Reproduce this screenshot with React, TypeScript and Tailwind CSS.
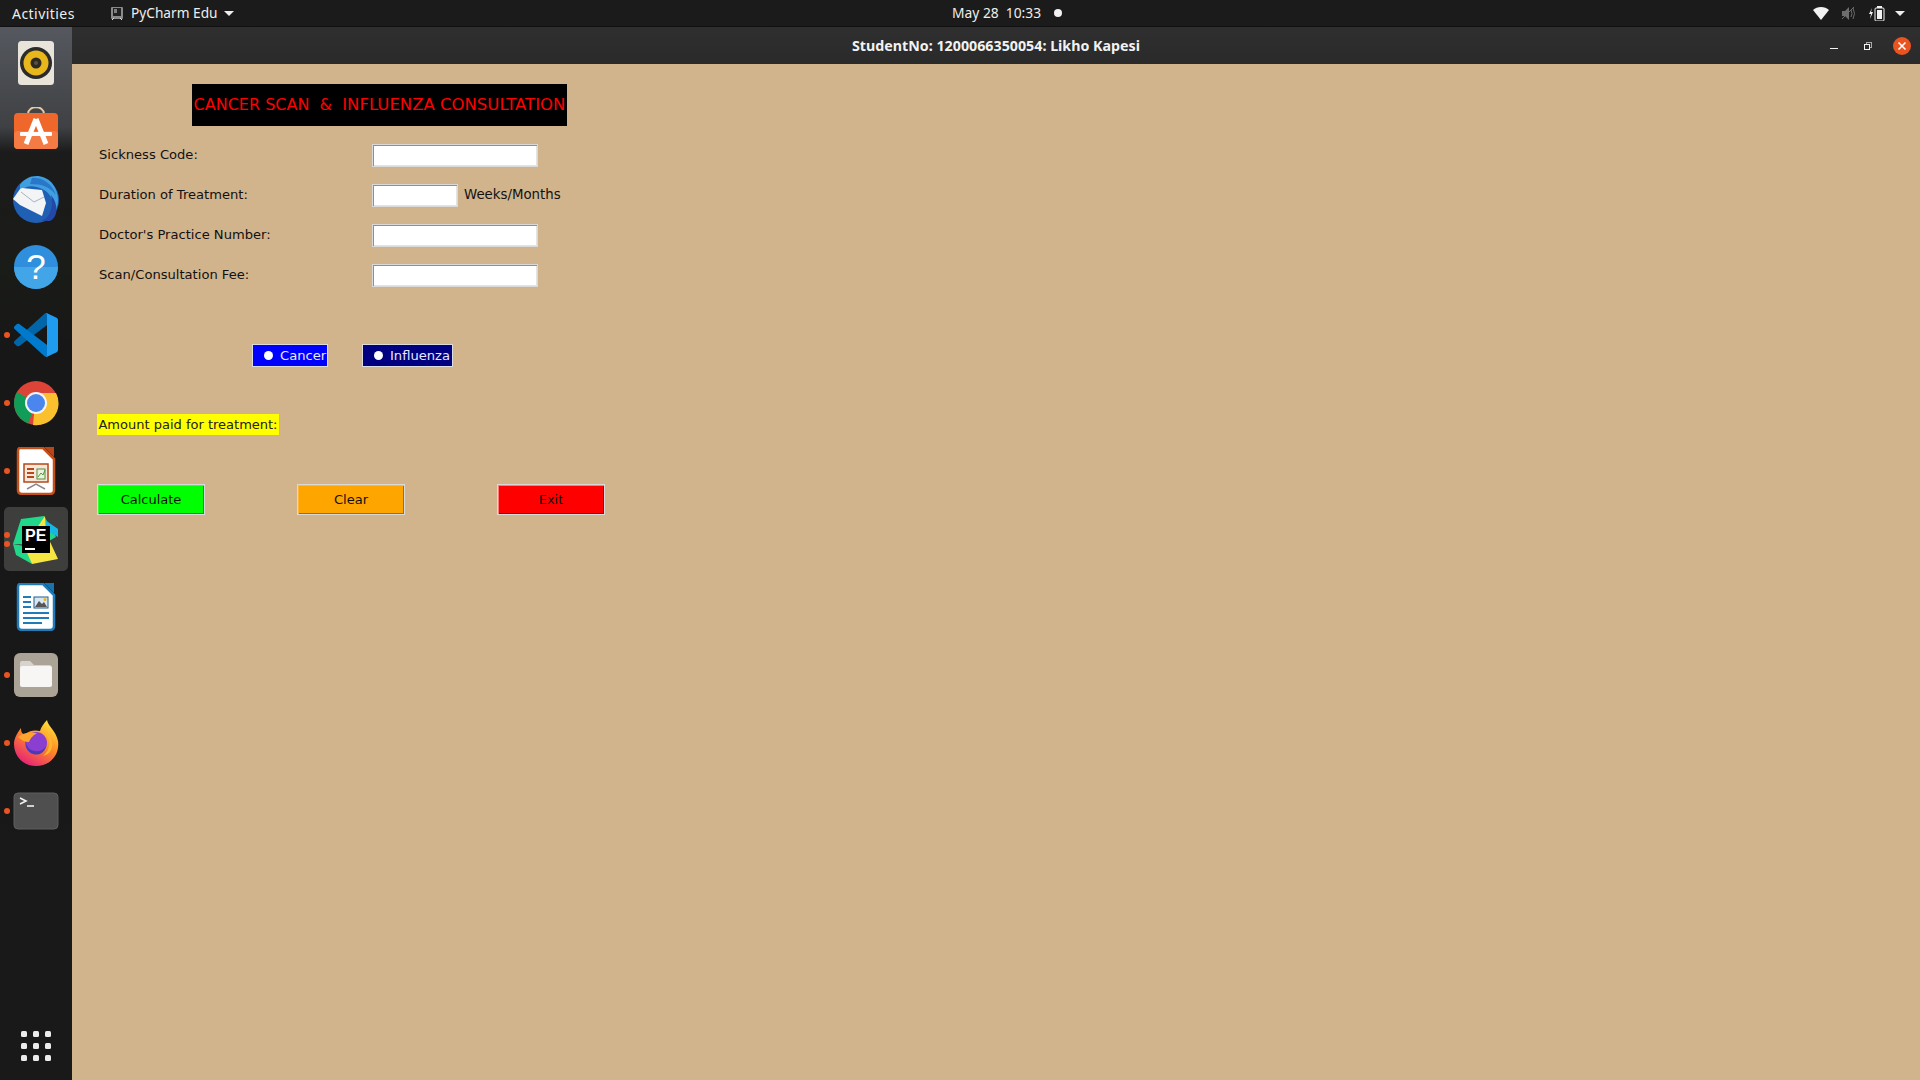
import React from 'react';

const dejavu = "font-['DejaVu_Sans',sans-serif]";

const Rhythmbox = () => (
  <svg width="48" height="48" viewBox="0 0 48 48">
    <rect x="6" y="2" width="36" height="44" rx="3.5" fill="#e8e4da" />
    <circle cx="24" cy="24" r="16" fill="#2b2b2b" />
    <circle cx="24" cy="24" r="12.5" fill="#e8b71c" />
    <circle cx="24" cy="24" r="5.5" fill="#2f2a20" />
    <circle cx="24" cy="24" r="2" fill="#55524a" />
  </svg>
);

const Software = () => (
  <svg width="48" height="48" viewBox="0 0 48 48">
    <path d="M16 7 C16 -2 32 -2 32 7" fill="none" stroke="#e9c9a2" strokeWidth="2" />
    <rect x="2" y="6" width="44" height="36" rx="4" fill="#f0672b" />
    <rect x="2" y="24" width="44" height="18" rx="4" fill="#f47b43" />
    <path d="M24 12 L14 37 M24 12 L34 37" stroke="#fff" strokeWidth="5" fill="none" />
    <rect x="8" y="25" width="32" height="4" rx="1" fill="#fff" />
  </svg>
);

const Thunderbird = () => (
  <svg width="48" height="48" viewBox="0 0 48 48">
    <circle cx="24" cy="25" r="23" fill="#1f5fb4" />
    <path d="M8 10 C14 0 30 -3 40 8 C48 18 48 32 40 42 C44 30 40 18 30 14 C22 10 14 10 8 16Z" fill="#3f9fe0" />
    <path d="M20 3 C30 2 40 8 44 20 C38 12 30 9 18 9Z" fill="#2a77c9" />
    <path d="M8 14 L10 13 L30 15 L34 28 L30 41 L8 30 L1 24Z" fill="#f3f4f6" />
    <path d="M9 17 L22 27 L32 22" fill="none" stroke="#a9b2bd" strokeWidth="1" />
    <path d="M30 46 C38 42 42 32 39 20 C47 30 46 42 38 46Z" fill="#2348a8" />
  </svg>
);

const Help = () => (
  <svg width="48" height="48" viewBox="0 0 48 48">
    <circle cx="24" cy="24" r="22" fill="#2f8fdc" />
    <path d="M2 24 H46 A22 22 0 0 1 2 24Z" fill="#42a5e8" />
    <text x="24" y="36" textAnchor="middle" fontSize="35" fontFamily="'Liberation Sans',sans-serif" fill="#fff">?</text>
  </svg>
);

const VSCode = () => (
  <svg width="44" height="44" viewBox="0 0 100 100">
    <path d="M96.4 10.8 75.8.9c-2.4-1.1-5.2-.7-7.1 1.2L1.3 63.6c-1.8 1.7-1.8 4.5 0 6.2l5.5 5c1.5 1.3 3.7 1.4 5.3.2L93.2 13.6c2.7-2.1 6.6-.2 6.6 3.2v-.2c0-2.4-1.4-4.6-3.4-5.8z" fill="#0065a9" />
    <path d="M96.4 89.2 75.8 99.1c-2.4 1.1-5.2.7-7.1-1.2L1.3 36.4c-1.8-1.7-1.8-4.5 0-6.2l5.5-5c1.5-1.3 3.7-1.4 5.3-.2l81.1 61.4c2.7 2.1 6.6.2 6.6-3.2v.2c0 2.4-1.4 4.6-3.4 5.8z" fill="#007acc" />
    <path d="M75.8 99.1c-2.4 1.1-5.2.7-7.1-1.2 2.3 2.3 6.3.7 6.3-2.6V4.7c0-3.3-4-4.9-6.3-2.6 1.9-1.9 4.7-2.3 7.1-1.2l20.6 9.9c2.2 1 3.6 3.2 3.6 5.6v67.2c0 2.4-1.4 4.6-3.6 5.6z" fill="#1f9cf0" />
  </svg>
);

const Chrome = () => (
  <svg width="48" height="48" viewBox="0 0 48 48">
    <circle cx="24" cy="24" r="22" fill="#db4437" />
    <path d="M24 24 L5 13 A22 22 0 0 0 16 44.5Z" fill="#0f9d58" />
    <path d="M24 14 H44 A22 22 0 0 1 21 46 Z" fill="#fbc02d" />
    <circle cx="24" cy="24" r="11" fill="#f5f5f5" />
    <circle cx="24" cy="24" r="9" fill="#4b86ee" />
  </svg>
);

const Impress = () => (
  <svg width="48" height="48" viewBox="0 0 48 48">
    <path d="M8 1 H31 L42 12 V43 Q42 47 38 47 H10 Q6 47 6 43 V4 Q6 1 8 1Z" fill="#fff" stroke="#c4501b" strokeWidth="2.5" />
    <path d="M32 0 H42 V10Z" fill="#b5471b" />
    <rect x="12" y="17" width="24" height="18" fill="#f7e6da" stroke="#b5471b" strokeWidth="1.5" />
    <path d="M15 22 H22 M15 26 H22 M15 30 H22" stroke="#b5471b" strokeWidth="2" />
    <rect x="25" y="22" width="8" height="10" fill="#e9f2df" stroke="#5b8a3a" />
    <path d="M26 30 L29 26 L31 28 L33 23" stroke="#4f9a3c" fill="none" />
    <path d="M15 42 L24 37 L33 42" fill="none" stroke="#8a8a8a" strokeWidth="1.5" />
  </svg>
);

const PyCharmEdu = () => (
  <svg width="48" height="52" viewBox="0 0 48 52">
    <path d="M9 6 L32 3 L44 24 L30 32 L1 31Z" fill="#21d789" />
    <path d="M32 6 V16 L46 24 L46 16 L36 9Z" fill="#17b7e5" />
    <path d="M33 3 L34 20 L46 46 L20 51 L10 37Z" fill="#f5e642" />
    <path d="M1 31 L12 33 L20 51 L4 42Z" fill="#21d789" />
    <rect x="10" y="13" width="28" height="27" fill="#000" />
    <text x="13" y="28" fontSize="16" fontWeight="700" fontFamily="'Liberation Sans',sans-serif" fill="#fff">PE</text>
    <rect x="13" y="35" width="10" height="2" fill="#fff" />
  </svg>
);

const Writer = () => (
  <svg width="48" height="48" viewBox="0 0 48 48">
    <path d="M8 1 H31 L42 12 V43 Q42 47 38 47 H10 Q6 47 6 43 V4 Q6 1 8 1Z" fill="#fff" stroke="#1f7cb8" strokeWidth="2.5" />
    <path d="M32 0 H42 V10Z" fill="#1774ad" />
    <path d="M11 14 H19 M11 19 H19 M11 24 H19" stroke="#1f7cb8" strokeWidth="2" />
    <rect x="22" y="14" width="14" height="11" fill="#d8e7f1" stroke="#1f5f8b" />
    <path d="M23 24 L27 18 L30 21 L32 19 L35 24Z" fill="#555" />
    <circle cx="33" cy="16.5" r="1.5" fill="#e8b71c" />
    <path d="M11 30 H37 M11 35 H37 M11 40 H30" stroke="#1f7cb8" strokeWidth="2" />
  </svg>
);

const Files = () => (
  <svg width="48" height="48" viewBox="0 0 48 48">
    <rect x="2" y="2" width="44" height="44" rx="6" fill="#aaa396" />
    <path d="M8 12 Q8 10 10 10 H18 L22 14 H37 Q40 14 40 17 V33 Q40 36 37 36 H11 Q8 36 8 33Z" fill="#d8d4cd" />
    <rect x="8" y="15" width="32" height="21" rx="2.5" fill="#f8f6f4" />
  </svg>
);

const Firefox = () => (
  <svg width="48" height="48" viewBox="0 0 48 48">
    <defs>
      <linearGradient id="ffBody" x1="0.8" y1="0" x2="0.2" y2="1">
        <stop offset="0" stopColor="#ffe53b" />
        <stop offset="0.45" stopColor="#ff8a24" />
        <stop offset="1" stopColor="#e5197f" />
      </linearGradient>
    </defs>
    <path d="M2 25 C2 20 5 14 9 9 C9 13 10 15 13 15 C18 11 24 11 28 12 C29 8 32 4 35 1 C36 7 44 12 46 22 C48 37 37 47 24 47 C11 47 2 37 2 25Z" fill="url(#ffBody)" />
    <circle cx="24" cy="24" r="11" fill="#8a3fd0" />
    <path d="M14 24 A10 10 0 0 0 34 27 A11 11 0 0 1 14 24Z" fill="#4b3ab5" />
    <path d="M6 18 C12 13 20 13 25 14 C20 17 18 20 17 23 C13 23 9 21 6 18Z" fill="#ffa52b" />
    <path d="M33 13 C39 20 39 31 31 37 C43 34 43 20 33 13Z" fill="#ffb52e" />
  </svg>
);

const Terminal = () => (
  <svg width="48" height="48" viewBox="0 0 48 48">
    <rect x="2" y="6" width="44" height="36" rx="4" fill="#4f4f4f" stroke="#5f5f5f" />
    <path d="M8 11 L14 14 L8 17" fill="none" stroke="#f2f2f2" strokeWidth="1.6" />
    <path d="M15 19 H22" stroke="#f2f2f2" strokeWidth="1.6" />
  </svg>
);

const AppGrid = () => (
  <div className="grid grid-cols-3 gap-[6px]">
    {Array.from({ length: 9 }).map((_, i) => (
      <div key={i} className="w-[6px] h-[6px] rounded-[1.5px] bg-[#ececec]" />
    ))}
  </div>
);

const dockItems = [
  { id: 'rhythmbox', icon: <Rhythmbox />, dots: 0 },
  { id: 'software', icon: <Software />, dots: 0 },
  { id: 'thunderbird', icon: <Thunderbird />, dots: 0 },
  { id: 'help', icon: <Help />, dots: 0 },
  { id: 'vscode', icon: <VSCode />, dots: 1 },
  { id: 'chrome', icon: <Chrome />, dots: 1 },
  { id: 'impress', icon: <Impress />, dots: 1 },
  { id: 'pycharm', icon: <PyCharmEdu />, dots: 2, active: true },
  { id: 'writer', icon: <Writer />, dots: 0 },
  { id: 'files', icon: <Files />, dots: 1 },
  { id: 'firefox', icon: <Firefox />, dots: 1 },
  { id: 'terminal', icon: <Terminal />, dots: 1 },
];

const Dock = () => (
  <aside className="relative w-[72px] shrink-0 flex flex-col items-center pt-[2px] pb-[13px] bg-[linear-gradient(180deg,#55585e_0px,#3f4144_100px,#1b1b1b_125px,#1a1c18_240px,#171717_320px,#191919_100%)]">
    {dockItems.map((item) => (
      <div key={item.id} className="relative w-full h-[68px] flex items-center justify-center">
        {item.active && <div className="absolute left-[4px] top-[2px] w-[64px] h-[64px] rounded-[5px] bg-[#3e3e3c]" />}
        {item.dots > 0 && (
          <div className="absolute left-[4px] top-0 h-full flex flex-col justify-center gap-[3px]">
            {Array.from({ length: item.dots }).map((_, i) => (
              <div key={i} className="w-[6px] h-[6px] rounded-full bg-[#e95420]" />
            ))}
          </div>
        )}
        <div className="relative flex">{item.icon}</div>
      </div>
    ))}
    <div className="mt-auto h-[42px] flex items-center justify-center">
      <AppGrid />
    </div>
  </aside>
);

const TopBar = () => (
  <header className="h-[27px] shrink-0 flex items-center bg-[#1b1b1b] text-[#eeeeec] text-[14px] font-['Noto_Sans',sans-serif] border-b border-[#111]">
    <div className="w-[952px] shrink-0 flex items-center">
      <span className="ml-[12px] w-[97px] tracking-[0.45px]">Activities</span>
      <svg width="16" height="16" viewBox="0 0 16 16" className="mr-[6px]">
        <rect x="2" y="2" width="12" height="12" rx="1" fill="#8a8a8a" />
        <rect x="4" y="3" width="8" height="8" fill="#222" />
        <path d="M5 5 H8 M5 7 H8 M5 13 L3 15 M11 13 L13 15" stroke="#ddd" />
      </svg>
      <span className="text-[13.7px]">PyCharm Edu</span>
      <div className="ml-[6px] w-0 h-0 border-l-[5px] border-r-[5px] border-t-[5px] border-l-transparent border-r-transparent border-t-[#eeeeec]" />
    </div>
    <span className="whitespace-pre text-[13.8px]">May 28  10:33</span>
    <div className="ml-[13px] w-[8px] h-[8px] rounded-full bg-[#f2f2f2]" />
    <div className="ml-auto flex items-center pr-[15px]">
      <svg width="16" height="13" viewBox="0 0 16 13" className="mr-[12px]">
        <path d="M0 3 C4 -1 12 -1 16 3 L8 13Z" fill="#f2f2f2" />
      </svg>
      <svg width="15" height="15" viewBox="0 0 15 15" className="mr-[13px]">
        <path d="M1 5 H4 L8 1 V14 L4 10 H1Z" fill="#6d6d6d" />
        <path d="M10 4 Q12 7.5 10 11 M12 2 Q15 7.5 12 13" fill="none" stroke="#6d6d6d" />
        <path d="M1 13 L13 1" stroke="#6d6d6d" />
      </svg>
      <svg width="16" height="15" viewBox="0 0 16 15" className="mr-[10px]">
        <path d="M3 2 L0 8 H2 L1 13 L4 6 H2Z" fill="#f2f2f2" />
        <rect x="6" y="2" width="9" height="13" rx="1" fill="none" stroke="#f2f2f2" />
        <rect x="8" y="4" width="5" height="9" fill="#f2f2f2" />
        <rect x="8" y="0" width="5" height="2" fill="#f2f2f2" />
      </svg>
      <div className="w-0 h-0 border-l-[5px] border-r-[5px] border-t-[5px] border-l-transparent border-r-transparent border-t-[#eeeeec]" />
    </div>
  </header>
);

const TitleBar = () => (
  <div className="relative h-[37px] shrink-0 flex items-center justify-center bg-[linear-gradient(180deg,#2f2f2f,#2a2a2a)] text-[#f2f2f2] text-[14.25px] font-bold font-['Noto_Sans',sans-serif]">
    <span>StudentNo: 1200066350054: Likho Kapesi</span>
    <div className="absolute right-[9px] top-0 h-full flex items-center">
      <div className="w-[8px] h-[1px] bg-[#f2f2f2] mt-[5px] mr-[26px]" />
      <svg width="8" height="8" viewBox="0 0 8 8" className="mr-[21px]">
        <rect x="2.5" y="0.5" width="5" height="5" fill="none" stroke="#aaa" />
        <rect x="0.5" y="2.5" width="5" height="5" fill="#2c2c2c" stroke="#f2f2f2" />
      </svg>
      <svg width="18" height="18" viewBox="0 0 18 18">
        <circle cx="9" cy="9" r="9" fill="#e95420" />
        <path d="M5.5 5.5 L12.5 12.5 M12.5 5.5 L5.5 12.5" stroke="#fff" strokeWidth="1.6" />
      </svg>
    </div>
  </div>
);

const fields = [
  { label: 'Sickness Code:', short: false },
  { label: 'Duration of Treatment:', short: true },
  { label: "Doctor's Practice Number:", short: false },
  { label: 'Scan/Consultation Fee:', short: false },
];

const FormRow: React.FC<{ label: string; short: boolean }> = ({ label, short }) => (
  <div className="flex items-start h-[23px] text-[13.1px] leading-[21px] text-[#111]">
    <label className="w-[300px] shrink-0 pl-[27px]">{label}</label>
    <input
      type="text"
      className={`h-[23px] bg-white border border-[#d9d9d9] outline-none shadow-[inset_1px_1px_0_#8f8f8f,inset_-1px_-1px_0_#e4e4e4] ${short ? 'w-[86px]' : 'w-[166px]'}`}
    />
    {short && <span className="ml-[6px] text-[13.33px]">Weeks/Months</span>}
  </div>
);

const RadioChip: React.FC<{ label: string; className: string }> = ({ label, className }) => (
  <label className={`h-[23px] flex items-center border border-[#dcdcdc] text-[13.1px] text-[#e8e8ff] whitespace-nowrap ${className}`}>
    <span className="ml-[11px] mr-[7px] w-[9px] h-[9px] shrink-0 rounded-full bg-white" />
    {label}
  </label>
);

const TkButton: React.FC<{ label: string; className: string }> = ({ label, className }) => (
  <button className={`w-[108px] h-[31px] border border-[#d9d9d9] text-[13px] text-[#111] ${className}`}>{label}</button>
);

const ConsultationForm = () => (
  <main className={`flex-1 flex flex-col bg-[#d2b48c] ${dejavu}`}>
    <h1 className="ml-[120px] mt-[20px] w-[375px] h-[42px] flex items-center justify-center bg-black text-[#ff0000] text-[16.5px] font-normal whitespace-pre">
      <span className="text-[16px]">CANCER SCAN  &  </span>INFLUENZA CONSULTATION
    </h1>
    <div className="mt-[18px] flex flex-col gap-[17px]">
      {fields.map((f) => (
        <FormRow key={f.label} label={f.label} short={f.short} />
      ))}
    </div>
    <div className="mt-[57px] ml-[180px] flex gap-[34px]">
      <RadioChip label="Cancer" className="w-[76px] bg-[#0000ff]" />
      <RadioChip label="Influenza" className="w-[91px] bg-[#000080]" />
    </div>
    <div className="mt-[47px] ml-[25px] w-[182px] h-[21px] flex items-center justify-center bg-[#ffff00] text-[13px] text-[#222] whitespace-nowrap">
      Amount paid for treatment:
    </div>
    <div className="mt-[49px] ml-[25px] flex gap-[92px]">
      <TkButton label="Calculate" className="bg-[#00ff00] shadow-[inset_1px_1px_0_#33ff33,inset_-1px_-1px_0_#00a000]" />
      <TkButton label="Clear" className="bg-[#ffa500] shadow-[inset_1px_1px_0_#ffb733,inset_-1px_-1px_0_#a86d00]" />
      <TkButton label="Exit" className="bg-[#ff0000] shadow-[inset_1px_1px_0_#ff7a7a,inset_-1px_-1px_0_#a80000]" />
    </div>
  </main>
);

export default function App() {
  return (
    <div className="w-[1920px] h-[1080px] overflow-hidden flex flex-col">
      <TopBar />
      <div className="flex-1 flex min-h-0">
        <Dock />
        <div className="flex-1 flex flex-col">
          <TitleBar />
          <ConsultationForm />
        </div>
      </div>
    </div>
  );
}
